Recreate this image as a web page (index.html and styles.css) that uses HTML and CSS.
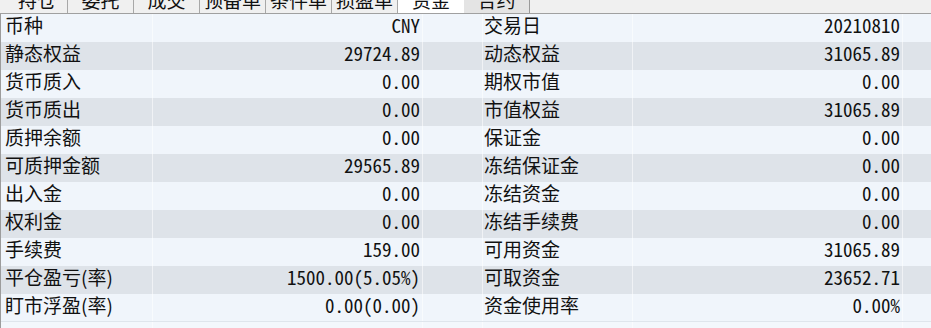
FILE: index.html
```
<!DOCTYPE html>
<html lang="zh-CN">
<head>
<meta charset="utf-8">
<title>资金</title>
<link rel="stylesheet" href="styles.css">
</head>
<body>
<div class="tabs">
  <div class="tab first"><span>持仓</span></div>
  <div class="tab"><span>委托</span></div>
  <div class="tab"><span>成交</span></div>
  <div class="tab"><span>预备单</span></div>
  <div class="tab"><span>条件单</span></div>
  <div class="tab"><span>损盈单</span></div>
  <div class="tab active"><span>资金</span></div>
  <div class="tab dim"><span>合约</span></div>
</div>
<div class="table">
  <div class="row odd"><div class="lab">币种</div><div class="val">CNY</div><div class="gap"></div><div class="lab r">交易日</div><div class="val">20210810</div><div class="end"></div></div>
  <div class="row even"><div class="lab">静态权益</div><div class="val">29724.89</div><div class="gap"></div><div class="lab r">动态权益</div><div class="val">31065.89</div><div class="end"></div></div>
  <div class="row odd"><div class="lab">货币质入</div><div class="val">0.00</div><div class="gap"></div><div class="lab r">期权市值</div><div class="val">0.00</div><div class="end"></div></div>
  <div class="row even"><div class="lab">货币质出</div><div class="val">0.00</div><div class="gap"></div><div class="lab r">市值权益</div><div class="val">31065.89</div><div class="end"></div></div>
  <div class="row odd"><div class="lab">质押余额</div><div class="val">0.00</div><div class="gap"></div><div class="lab r">保证金</div><div class="val">0.00</div><div class="end"></div></div>
  <div class="row even"><div class="lab">可质押金额</div><div class="val">29565.89</div><div class="gap"></div><div class="lab r">冻结保证金</div><div class="val">0.00</div><div class="end"></div></div>
  <div class="row odd"><div class="lab">出入金</div><div class="val">0.00</div><div class="gap"></div><div class="lab r">冻结资金</div><div class="val">0.00</div><div class="end"></div></div>
  <div class="row even"><div class="lab">权利金</div><div class="val">0.00</div><div class="gap"></div><div class="lab r">冻结手续费</div><div class="val">0.00</div><div class="end"></div></div>
  <div class="row odd"><div class="lab">手续费</div><div class="val">159.00</div><div class="gap"></div><div class="lab r">可用资金</div><div class="val">31065.89</div><div class="end"></div></div>
  <div class="row even"><div class="lab">平仓盈亏(率)</div><div class="val">1500.00(5.05%)</div><div class="gap"></div><div class="lab r">可取资金</div><div class="val">23652.71</div><div class="end"></div></div>
  <div class="row odd last"><div class="lab">盯市浮盈(率)</div><div class="val">0.00(0.00)</div><div class="gap"></div><div class="lab r">资金使用率</div><div class="val">0.00%</div><div class="end"></div></div>
  <div class="row blank"><div></div><div></div><div></div><div></div><div></div><div class="end"></div></div>
</div>
</body>
</html>
```
FILE: styles.css
```
html, body {
  margin: 0;
  padding: 0;
  background: #f3f7fc;
}
body {
  width: 931px;
  height: 328px;
  overflow: hidden;
  font-family: "Noto Sans CJK SC", sans-serif;
  font-size: 19px;
  color: #111;
}
.tabs {
  display: flex;
  height: 13px;
  overflow: hidden;
  background: #f0f0f0;
  border-bottom: 1px solid #a0a0a0;
}
.tab {
  width: 65px;
  height: 13px;
  border-right: 1px solid #a8a8a8;
  text-align: center;
  flex: none;
}
.tab span {
  display: block;
  line-height: 22px;
  margin-top: -11px;
}
.tab.first {
  width: 60px;
  padding-left: 7px;
}
.tab.active {
  background: #ffffff;
  width: 66px;
  border-right: none;
}
.tab.dim {
  background: #e4e4e4;
  border-right: 1px solid #9a9a9a;
}
.table {
  border-left: 1px solid #9c9c9c;
  height: 314px;
  overflow: hidden;
}
.row {
  display: grid;
  grid-template-columns: 152px 270px 60px 150px 270px 1fr;
  height: 28px;
}
.row > div {
  border-right: 1px solid rgba(255, 255, 255, 0.55);
  line-height: 22px;
  white-space: nowrap;
}
.row > div.end {
  border-right: none;
}
.odd {
  background: #f0f5fb;
}
.even {
  background: #dee3e9;
}
.last {
  height: 27px;
  border-bottom: 1px solid #dfe5ec;
}
.blank {
  background: #f3f7fc;
  height: 6px;
}
.lab {
  padding-left: 4px;
}
.lab.r {
  padding-left: 1px;
}
.val {
  text-align: right;
  padding-right: 2px;
  font-family: "Noto Sans Mono CJK SC", "Liberation Mono", monospace;
}
```
